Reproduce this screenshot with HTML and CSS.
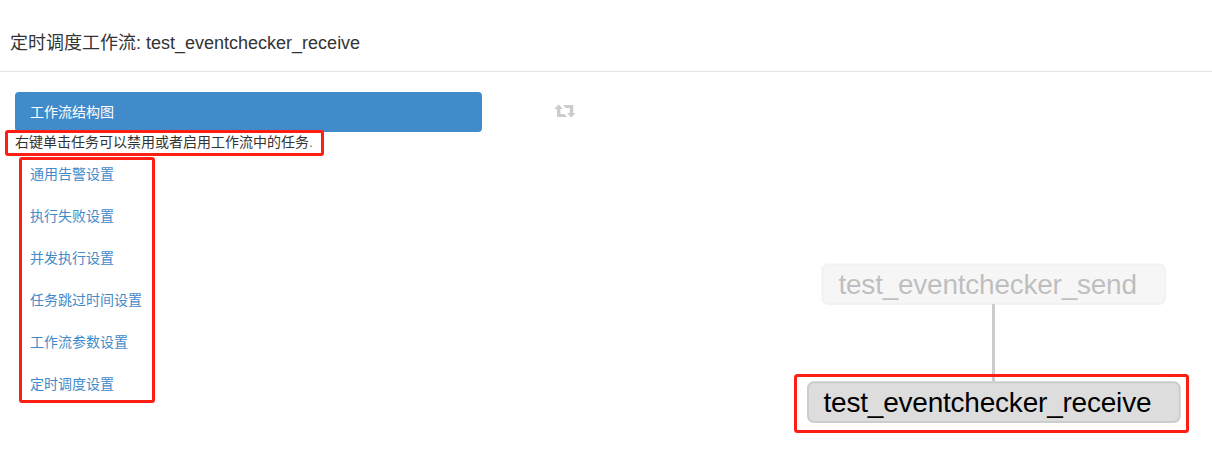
FILE: index.html
```html
<!DOCTYPE html>
<html lang="zh">
<head>
<meta charset="utf-8">
<title>定时调度工作流</title>
<link rel="stylesheet" href="styles.css">
</head>
<body>
<header class="header"><h1 class="title">定时调度工作流: <span class="title-name">test_eventchecker_receive</span></h1></header>
<main class="body">
  <nav class="side">
    <a class="item active">工作流结构图</a>
    <p class="hint">右键单击任务可以禁用或者启用工作流中的任务<span class="stop">.</span></p>
    <a class="item">通用告警设置</a>
    <a class="item">执行失败设置</a>
    <a class="item">并发执行设置</a>
    <a class="item">任务跳过时间设置</a>
    <a class="item">工作流参数设置</a>
    <a class="item">定时调度设置</a>
    <div class="mark mark-hint"></div>
    <div class="mark mark-list"></div>
  </nav>
  <section class="graph">
    <svg class="canvas" width="670" height="382" viewBox="542 72 670 382">
      <path class="icon" d="M554.3 109L558.6 104.5L562.9 109H560.4V114H564.5L567 117H557V109ZM563 105H573.3V113H575.5L571.3 117.5L567 113H569.8V108H565.5Z"/>
      <line class="edge" x1="993.5" y1="304" x2="993.5" y2="382"/>
      <g class="disabled">
        <rect class="node" x="822.5" y="264.5" width="342.5" height="39.5" rx="6"/>
        <text class="label" x="838.5" y="294" textLength="298.5">test_eventchecker_send</text>
      </g>
      <rect class="node" x="808" y="382.2" width="371.7" height="39.8" rx="6"/>
      <text class="label" x="823.5" y="412" textLength="328">test_eventchecker_receive</text>
      <rect class="callout" x="795.5" y="375.5" width="392" height="56" rx="2"/>
    </svg>
  </section>
</main>
</body>
</html>
```
FILE: styles.css
```css
body {
  margin: 0;
  height: 454px;
  overflow: hidden;
  background: #fff;
  color: #333;
  font: 14px/20px "Liberation Sans", "Noto Sans CJK SC", sans-serif;
}
.header {
  box-sizing: border-box;
  height: 72px;
  padding: 33px 10px 0;
  border-bottom: 1px solid #e5e5e5;
}
.title { margin: 0; font-size: 18px; line-height: 20px; font-weight: 400; white-space: nowrap; }
.body { display: flex; height: 382px; }
.side {
  position: relative;
  box-sizing: border-box;
  width: 542px;
  padding: 20px 60px 0 15px;
}
.item {
  display: block;
  padding: 10px 15px;
  margin-bottom: 2px;
  border-radius: 4px;
  color: #428bca;
}
.active { margin-bottom: 0; background: #428bca; color: #fff; }
.hint { margin: 0 0 2px; }
.stop { color: #777; }
.mark {
  position: absolute;
  box-sizing: border-box;
  border: 3px solid #ff1e14;
  border-radius: 3px;
}
.mark-hint { left: 5px; top: 58px; width: 319px; height: 26px; }
.mark-list { left: 19px; top: 85px; width: 136px; height: 246px; }
.graph { flex: 1; }
.canvas { display: block; }
.icon { fill: #ccc; }
.edge { stroke: #ccc; stroke-width: 3; }
.node { fill: #ddd; stroke: #ccc; stroke-width: 2; }
.disabled { opacity: .25; }
.label { font-size: 28px; fill: #000; }
.callout { fill: none; stroke: #ff1e14; stroke-width: 3; }
```
